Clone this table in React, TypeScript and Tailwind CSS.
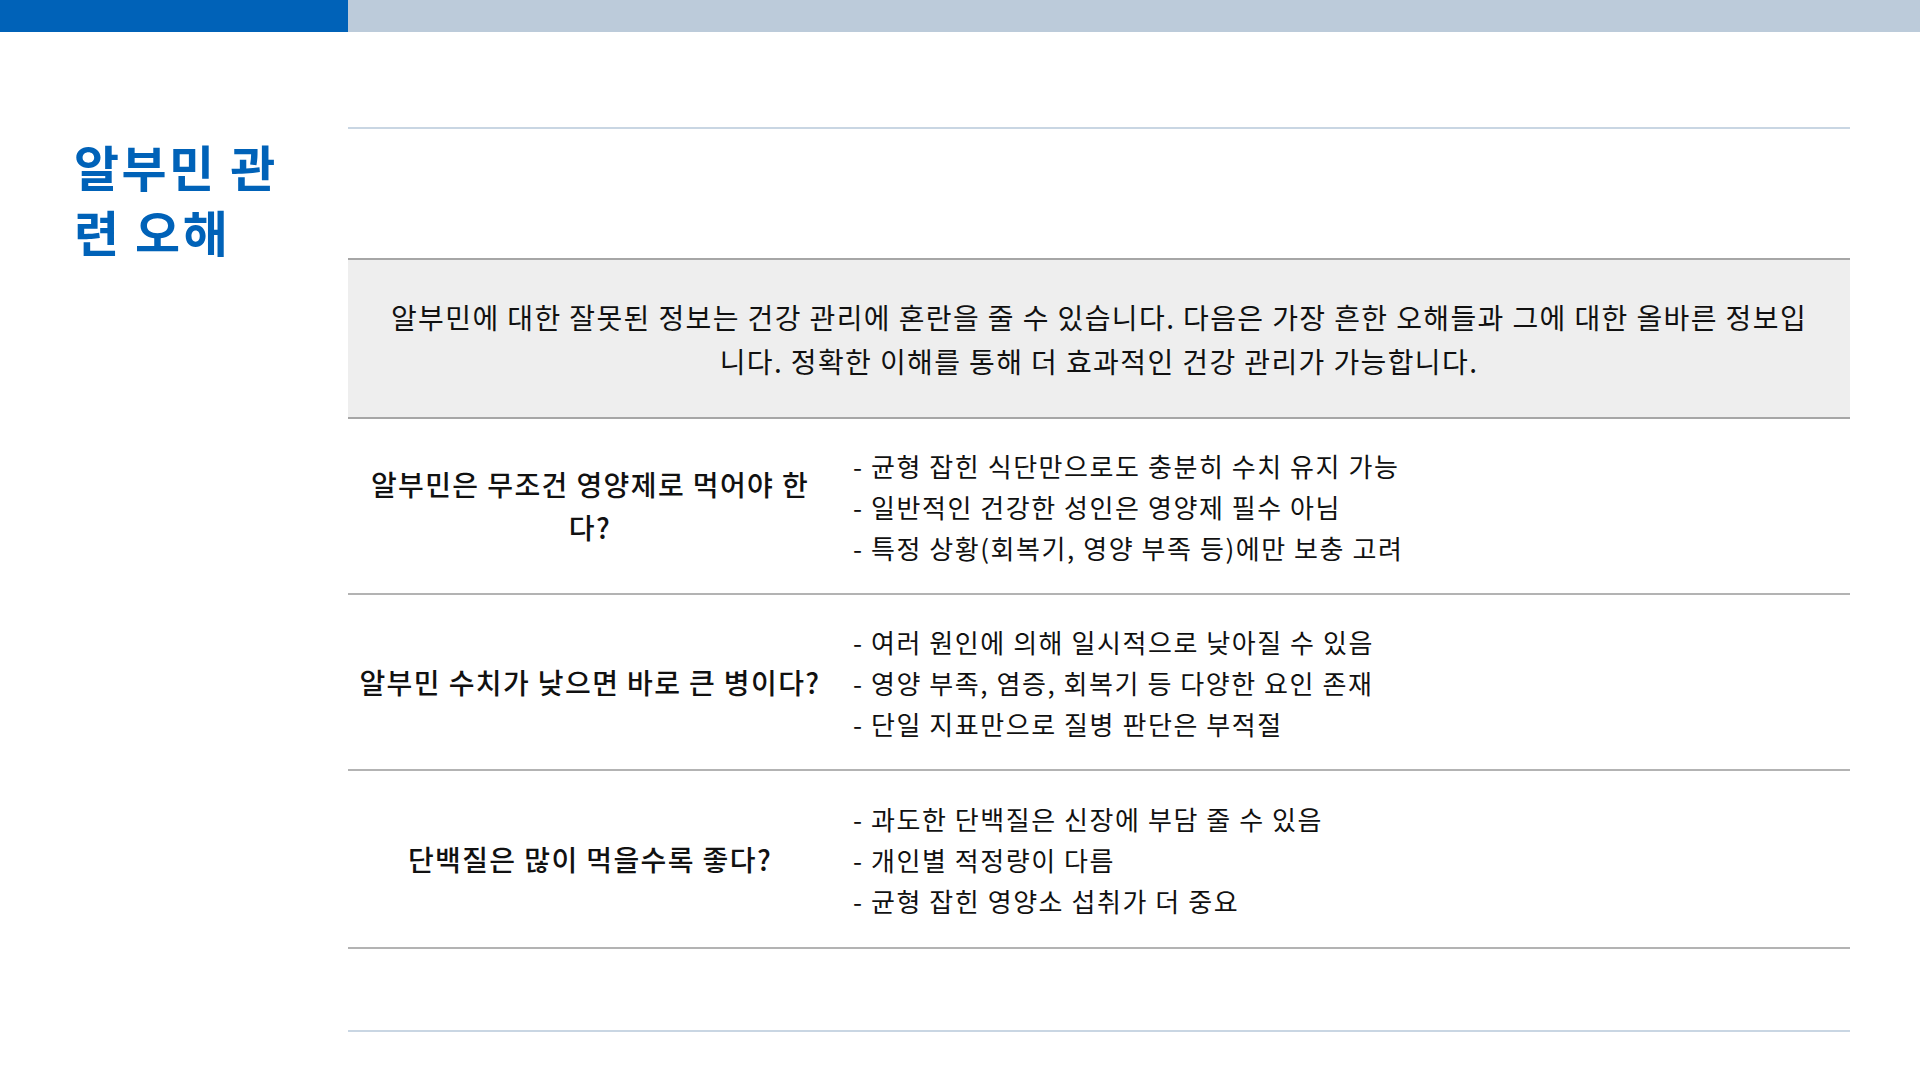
import React from "react";

const rows = [
  {
    q: "알부민은 무조건 영양제로 먹어야 한다?",
    a: [
      "- 균형 잡힌 식단만으로도 충분히 수치 유지 가능",
      "- 일반적인 건강한 성인은 영양제 필수 아님",
      "- 특정 상황(회복기, 영양 부족 등)에만 보충 고려",
    ],
    h: "h-[176px]",
  },
  {
    q: "알부민 수치가 낮으면 바로 큰 병이다?",
    a: [
      "- 여러 원인에 의해 일시적으로 낮아질 수 있음",
      "- 영양 부족, 염증, 회복기 등 다양한 요인 존재",
      "- 단일 지표만으로 질병 판단은 부적절",
    ],
    h: "h-[176px]",
  },
  {
    q: "단백질은 많이 먹을수록 좋다?",
    a: [
      "- 과도한 단백질은 신장에 부담 줄 수 있음",
      "- 개인별 적정량이 다름",
      "- 균형 잡힌 영양소 섭취가 더 중요",
    ],
    h: "h-[178px]",
  },
];

export default function App() {
  return (
    <div
      className="w-[1920px] h-[1080px] bg-white flex flex-col overflow-hidden"
      style={{ fontFamily: '"Noto Sans CJK KR", "Noto Sans", sans-serif' }}
    >
      <div className="flex h-[32px] shrink-0">
        <div className="w-[348px] bg-[#0062b8]" />
        <div className="flex-1 bg-[#bccbda]" />
      </div>
      <div className="flex flex-1">
        <div className="w-[348px] shrink-0 pl-[74px] pr-[30px] pt-[101px]">
          <h1 className="text-[49px] leading-[65px] font-bold tracking-[0.05em] text-[#0062b8]">
            알부민 관련 오해
          </h1>
        </div>
        <div className="w-[1502px] shrink-0 flex flex-col pt-[95px]">
          <div className="h-[2px] bg-[#c9d6e3]" />
          <div className="h-[129px]" />
          <div className="h-[161px] border-y-2 border-[#a6a6a6] bg-[#eeeeee] flex items-center justify-center px-[36px]">
            <p className="text-[28px] leading-[44px] tracking-[0.05em] text-[#111111] text-center">
              알부민에 대한 잘못된 정보는 건강 관리에 혼란을 줄 수 있습니다. 다음은 가장 흔한 오해들과 그에 대한 올바른 정보입니다. 정확한 이해를 통해 더 효과적인 건강 관리가 가능합니다.
            </p>
          </div>
          {rows.map((r, i) => (
            <div
              key={i}
              className={`${r.h} border-b-2 border-[#b3b3b3] grid grid-cols-[484px_1fr] items-center`}
            >
              <div className="px-[8px] text-center text-[28px] leading-[43px] tracking-[0.05em] font-medium text-[#111111]">
                {r.q}
              </div>
              <div className="pl-[21px] flex flex-col text-[26px] leading-[41px] tracking-[0.06em] text-[#111111]">
                {r.a.map((t, j) => (
                  <div key={j}>{t}</div>
                ))}
              </div>
            </div>
          ))}
          <div className="h-[81px]" />
          <div className="h-[2px] bg-[#c9d6e3]" />
        </div>
      </div>
    </div>
  );
}
